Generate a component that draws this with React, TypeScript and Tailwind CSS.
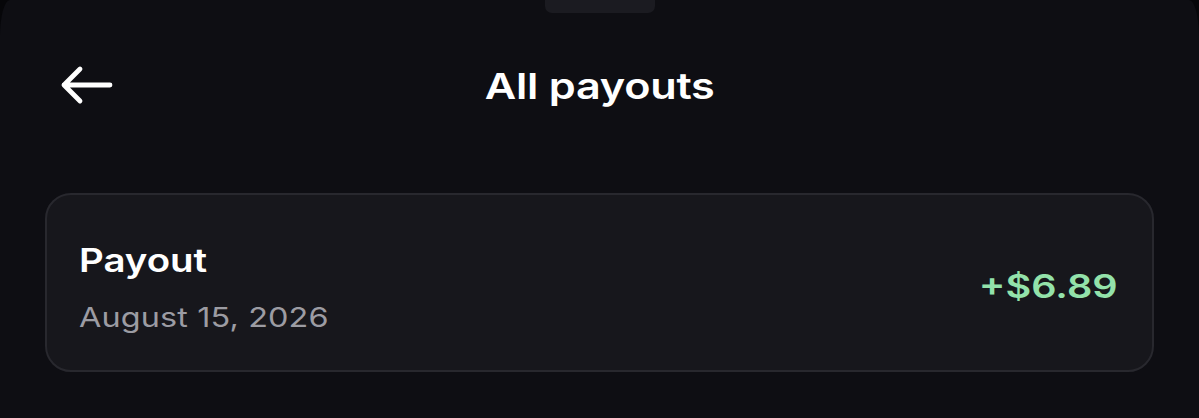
import React from "react";

export default function App() {
  return (
    <div className="w-[1199px] h-[418px] bg-[#060609] overflow-hidden" style={{ fontFamily: "Inter, 'Noto Sans', sans-serif" }}>
      <div className="relative w-full h-full bg-[#0e0e13] rounded-tl-[10px_36px] rounded-tr-[10px_36px] flex flex-col">
        <div className="absolute left-[545px] top-0 w-[110px] h-[13px] rounded-b-[7px] bg-[#1b1b21]" />
        <div className="relative h-[176px] flex items-start justify-center pt-[62px]">
          <svg className="absolute left-[60px] top-[64px]" width="54" height="42" viewBox="0 0 54 42" fill="none">
            <path d="M4 21H50M4 21L20 5M4 21L20 37" stroke="white" strokeWidth="4.8" strokeLinecap="round" strokeLinejoin="round" />
          </svg>
          <div className="text-white text-[36px] leading-[48px] font-semibold inline-block scale-x-[1.2] tracking-[-0.2px]">All payouts</div>
        </div>
        <div className="mx-[45px] mt-[17px] h-[179px] rounded-[26px] border-2 border-[#28282e] bg-[#17171c] flex items-center justify-between pl-[32px] pr-[34px]">
          <div className="flex flex-col items-start pt-[12px]">
            <div className="text-white text-[32px] leading-[40px] font-semibold inline-block origin-left scale-x-[1.2]">Payout</div>
            <div className="text-[#9c9ca3] text-[27px] leading-[38px] mt-[18px] inline-block origin-left scale-x-[1.2] tracking-[0.1px]">August 15, 2026</div>
          </div>
          <div className="text-[#93e2aa] text-[33px] leading-[40px] font-semibold mt-[6px] inline-block origin-right scale-x-[1.2]">+$6.89</div>
        </div>
      </div>
    </div>
  );
}
